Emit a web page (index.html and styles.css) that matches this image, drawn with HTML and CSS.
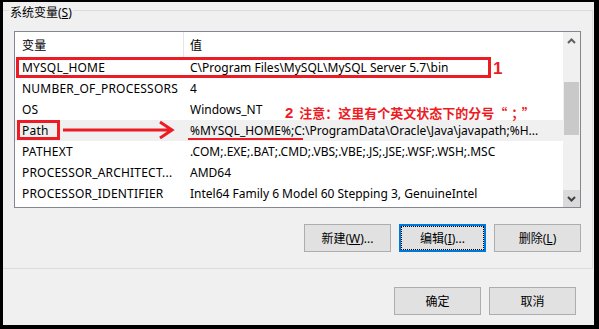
FILE: index.html
```html
<!DOCTYPE html>
<html lang="zh-CN">
<head>
  <meta charset="UTF-8">
  <title>系统变量</title>
  <link rel="stylesheet" href="styles.css">
</head>
<body>
  <div class="frame">
    <fieldset class="group">
      <legend>系统变量(<u>S</u>)</legend>
      <div class="list">
        <div class="list_body">
          <div class="list_head">
            <div class="col1">变量</div>
            <div class="col2">值</div>
          </div>
          <div class="row"><div class="col1">MYSQL_HOME</div><div class="col2">C\Program Files\MySQL\MySQL Server 5.7\bin</div></div>
          <div class="row"><div class="col1">NUMBER_OF_PROCESSORS</div><div class="col2">4</div></div>
          <div class="row"><div class="col1">OS</div><div class="col2">Windows_NT</div></div>
          <div class="row row_hover"><div class="col1">Path</div><div class="col2">%MYSQL_HOME%;C:\ProgramData\Oracle\Java\javapath;%H...</div></div>
          <div class="row"><div class="col1">PATHEXT</div><div class="col2">.COM;.EXE;.BAT;.CMD;.VBS;.VBE;.JS;.JSE;.WSF;.WSH;.MSC</div></div>
          <div class="row"><div class="col1">PROCESSOR_ARCHITECT...</div><div class="col2">AMD64</div></div>
          <div class="row"><div class="col1">PROCESSOR_IDENTIFIER</div><div class="col2">Intel64 Family 6 Model 60 Stepping 3, GenuineIntel</div></div>

          <!-- red notes drawn over the list -->
          <div class="mark mark_box1"></div>
          <span class="mark mark_num1">1</span>
          <div class="mark mark_box2"></div>
          <svg class="mark mark_arrow" width="116" height="24" viewBox="0 0 116 24">
            <path d="M3 12H111M100 4L112 12L100 20" fill="none" stroke="#ed1c24" stroke-width="3"/>
          </svg>
          <div class="mark mark_line"></div>
          <span class="mark note"><b class="note_num">2</b>注意：这里有个英文状态下的分号<span class="wide">“；”</span></span>
        </div>
        <div class="scrollbar">
          <div class="sb_btn">
            <svg width="9" height="6" viewBox="0 0 9 6"><path d="M1 5L4.5 1.5L8 5" fill="none" stroke="#606060" stroke-width="2"/></svg>
          </div>
          <div class="sb_track"><div class="sb_thumb"></div></div>
          <div class="sb_btn sb_hot">
            <svg width="9" height="6" viewBox="0 0 9 6"><path d="M1 1L4.5 4.5L8 1" fill="none" stroke="#404040" stroke-width="2"/></svg>
          </div>
        </div>
      </div>
      <div class="btn_row">
        <button type="button" class="btn">新建(<u>W</u>)...</button>
        <button type="button" class="btn btn_default">编辑(<u>I</u>)...</button>
        <button type="button" class="btn">删除(<u>L</u>)</button>
      </div>
    </fieldset>
    <div class="btn_row bottom_row">
      <button type="button" class="btn">确定</button>
      <button type="button" class="btn">取消</button>
    </div>
  </div>
</body>
</html>
```

FILE: styles.css
```css
body {
	margin: 0;
	background-color: #000;
	font-family: "Noto Sans", "Noto Sans CJK SC", sans-serif;
	font-size: 12px;
	color: #000;
}

.frame {
	box-sizing: border-box;
	width: 599px;
	height: 329px;
	border-style: solid;
	border-color: #000;
	border-width: 2px 5px 4px 3px;
	background-color: #f0f0f0;
	overflow: hidden;
}

.group {
	margin: -3px 1px 0 0;
	padding: 0 0 16px 0;
	border: 1px solid #dcdcdc;
	border-left: none;
	min-width: 0;
}

.group legend {
	margin-left: 6px;
	padding: 6px 1px 0;
	line-height: 16px;
}

.list {
	display: flex;
	box-sizing: border-box;
	width: 567px;
	height: 177px;
	margin: 10px 0 0 11px;
	border: 1px solid #828790;
	background-color: #fff;
}

.list_body {
	flex: 1;
	position: relative;
	overflow: hidden;
}

.list_head {
	display: flex;
	height: 25px;
	align-items: center;
}

.col1 {
	box-sizing: border-box;
	width: 169px;
	flex-shrink: 0;
	padding-left: 7px;
	white-space: nowrap;
	overflow: hidden;
	letter-spacing: 0.2px;
}

.col2 {
	padding-left: 6px;
	white-space: nowrap;
}

.list_head .col1 {
	align-self: stretch;
	display: flex;
	align-items: center;
	border-right: 1px solid #e5e5e5;
}

.row {
	display: flex;
	height: 21px;
	align-items: center;
}

.row_hover {
	background-color: #f0f0f0;
}

.scrollbar {
	width: 17px;
	display: flex;
	flex-direction: column;
	background-color: #f0f0f0;
}

.sb_btn {
	height: 17px;
	display: flex;
	align-items: center;
	justify-content: center;
}

.sb_hot {
	background-color: #dadada;
}

.sb_track {
	flex: 1;
	padding: 33px 1px 0;
}

.sb_thumb {
	height: 53px;
	background-color: #c9c9c9;
}

.mark {
	position: absolute;
}

.mark_box1 {
	box-sizing: border-box;
	left: 1px;
	top: 25px;
	width: 475px;
	height: 21px;
	border: 3px solid #ed1c24;
}

.mark_num1 {
	left: 478px;
	top: 28px;
	font-family: "Liberation Sans", Arial, sans-serif;
	font-weight: bold;
	font-size: 17px;
	line-height: 17px;
	color: #ed1c24;
}

.mark_box2 {
	box-sizing: border-box;
	left: 2px;
	top: 88px;
	width: 43px;
	height: 20px;
	border: 3px solid #ed1c24;
}

.mark_arrow {
	left: 45px;
	top: 86px;
}

.mark_line {
	left: 173px;
	top: 106px;
	width: 115px;
	height: 2px;
	background-color: #ed1c24;
}

.note {
	left: 270px;
	top: 73px;
	font-family: "Noto Sans CJK SC", sans-serif;
	font-weight: bold;
	font-size: 13px;
	line-height: 16px;
	color: #ed1c24;
	white-space: nowrap;
}

.note .wide {
	letter-spacing: 4px;
}

.note_num {
	font-family: "Liberation Sans", Arial, sans-serif;
	font-size: 15px;
	margin-right: 6px;
}

.btn_row {
	display: flex;
	justify-content: flex-end;
	gap: 8px;
	width: 567px;
	margin: 16px 0 0 11px;
}

.bottom_row {
	width: auto;
	margin: 18px 18px 0 0;
}

.btn {
	box-sizing: border-box;
	width: 87px;
	height: 28px;
	padding: 0;
	border: 1px solid #adadad;
	background-color: #e1e1e1;
	font-family: inherit;
	font-size: 12px;
	color: #000;
	display: flex;
	align-items: center;
	justify-content: center;
}

.btn_default {
	border: 2px solid #0078d7;
	outline: 1px dotted #000;
	outline-offset: -3px;
}
```
